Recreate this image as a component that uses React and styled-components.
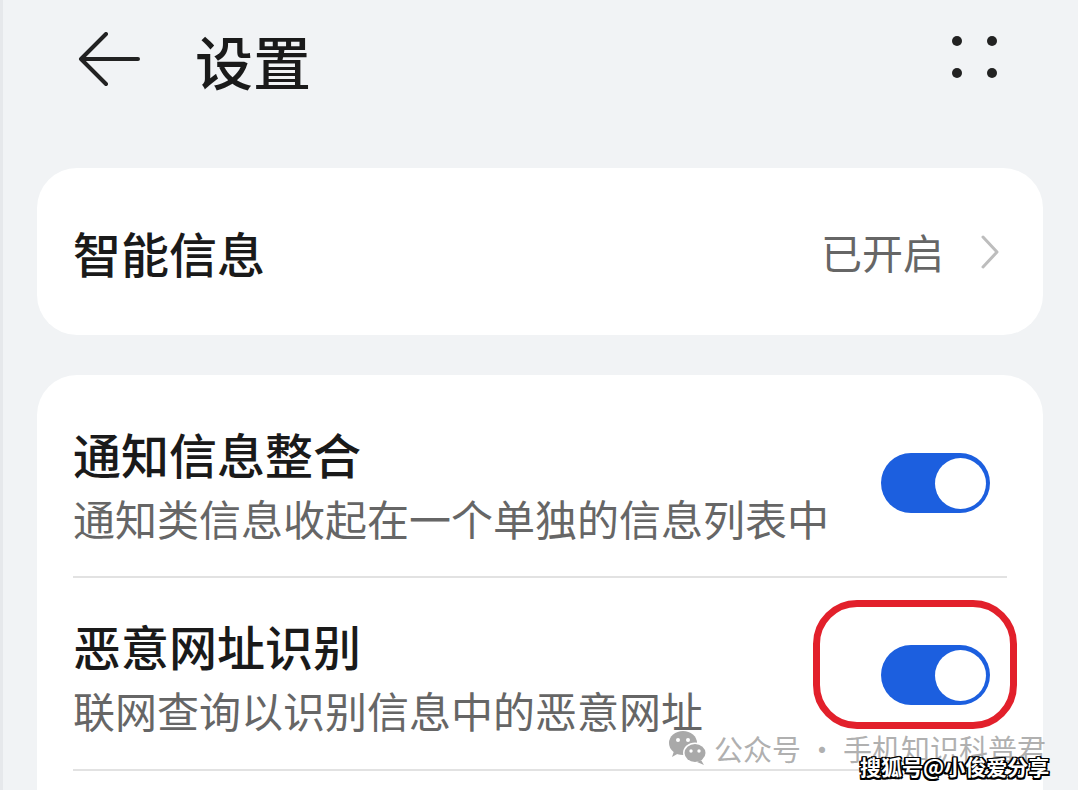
import React from "react";
import styled, { createGlobalStyle } from "styled-components";

const Global = createGlobalStyle`
  html, body { margin: 0; padding: 0; background: #f1f3f5; }
  body { font-family: "Noto Sans CJK SC", "Noto Sans", sans-serif; }
`;

const Page = styled.div`
  position: relative;
  width: 1078px;
  height: 790px;
  overflow: hidden;
  background: #f1f3f5;
  box-sizing: border-box;
  padding: 0 35px 0 37px;
  box-shadow: inset 3px 0 0 #e6e8eb;
`;

const Header = styled.div`
  height: 120px;
  display: flex;
  align-items: center;
  padding: 0 45px 0 41px;
  margin-bottom: 48px;
`;

const BackBtn = styled.div`
  width: 62px;
  height: 56px;
  display: flex;
  align-items: center;
  margin-right: 55px;
`;

const Title = styled.h1`
  margin: 0;
  flex: 1;
  font-size: 58px;
  font-weight: 500;
  color: #1a1a1a;
  line-height: 1;
`;

const Dots = styled.svg`
  margin-top: -6px;
`;

const Card = styled.div`
  background: #fff;
  border-radius: 40px;
  padding: ${(p) => p.$pad || "0 36px"};
  margin-bottom: 40px;
`;

const LinkRow = styled.div`
  height: 167px;
  display: flex;
  align-items: center;
  padding-right: 7px;
`;

const RowTitle = styled.div`
  font-size: 48px;
  font-weight: 500;
  color: #1a1a1a;
  line-height: 60px;
  flex: 1;
`;

const Value = styled.div`
  font-size: 41px;
  color: #666;
  margin-right: 36px;
  line-height: 1;
`;

const SwitchRow = styled.div`
  display: flex;
  align-items: center;
  padding: ${(p) => (p.$first ? "48px 0 27px" : "37px 0 28px")};
  border-bottom: 2px solid #e2e2e2;
`;

const TextCol = styled.div`
  flex: 1;
  display: flex;
  flex-direction: column;
`;

const Sub = styled.div`
  font-size: 42px;
  color: #666;
  line-height: 62px;
  margin-top: 4px;
`;

const ToggleWrap = styled.div`
  position: relative;
  margin-right: 17px;
  margin-top: -6px;
`;

const Track = styled.div`
  width: 109px;
  height: 60px;
  border-radius: 30px;
  background: #1c5fdf;
  display: flex;
  align-items: center;
  justify-content: flex-end;
  padding: 0 4px;
  box-sizing: border-box;
`;

const Thumb = styled.div`
  width: 51px;
  height: 51px;
  border-radius: 50%;
  background: #fff;
`;

const Ring = styled.div`
  position: absolute;
  left: -68px;
  right: -27px;
  top: -45px;
  bottom: -24px;
  border: 7px solid #e2202b;
  border-radius: 44px;
  pointer-events: none;
`;

const Watermark = styled.div`
  position: absolute;
  left: 668px;
  top: 728px;
  display: flex;
  align-items: center;
  gap: 6px;
  white-space: nowrap;
`;

const WmText = styled.span`
  font-size: 29px;
  color: rgba(150, 150, 150, 0.75);
  line-height: 40px;
`;

const Sohu = styled.div`
  position: absolute;
  left: 860px;
  top: 753px;
  font-size: 21px;
  font-weight: 700;
  color: #fff;
  line-height: 26px;
  white-space: nowrap;
  text-shadow: -1.5px -1.5px 0 #000, 1.5px -1.5px 0 #000, -1.5px 1.5px 0 #000,
    1.5px 1.5px 0 #000, 0 1.5px 0 #000, 0 -1.5px 0 #000, 1.5px 0 0 #000,
    -1.5px 0 0 #000;
`;

const Toggle = ({ ring }) => (
  <ToggleWrap>
    <Track>
      <Thumb />
    </Track>
    {ring && <Ring />}
  </ToggleWrap>
);

export default function App() {
  return (
    <>
      <Global />
      <Page>
        <Header>
          <BackBtn>
            <svg width="62" height="56" viewBox="0 0 62 56">
              <path
                d="M60 27H4M28 2L3 27l25 25"
                fill="none"
                stroke="#222"
                strokeWidth="4"
                strokeLinecap="round"
                strokeLinejoin="round"
              />
            </svg>
          </BackBtn>
          <Title>设置</Title>
          <Dots width="46" height="44" viewBox="0 0 46 44">
            <circle cx="5" cy="6" r="5" fill="#222" />
            <circle cx="40" cy="6" r="5" fill="#222" />
            <circle cx="5" cy="38" r="5" fill="#222" />
            <circle cx="40" cy="38" r="5" fill="#222" />
          </Dots>
        </Header>

        <Card>
          <LinkRow>
            <RowTitle>智能信息</RowTitle>
            <Value>已开启</Value>
            <svg width="20" height="34" viewBox="0 0 20 34">
              <path
                d="M3 2l14 15L3 32"
                fill="none"
                stroke="#bdbdbd"
                strokeWidth="3"
                strokeLinecap="round"
                strokeLinejoin="round"
              />
            </svg>
          </LinkRow>
        </Card>

        <Card $pad="0 36px 80px">
          <SwitchRow $first>
            <TextCol>
              <RowTitle>通知信息整合</RowTitle>
              <Sub>通知类信息收起在一个单独的信息列表中</Sub>
            </TextCol>
            <Toggle />
          </SwitchRow>
          <SwitchRow>
            <TextCol>
              <RowTitle>恶意网址识别</RowTitle>
              <Sub>联网查询以识别信息中的恶意网址</Sub>
            </TextCol>
            <Toggle ring />
          </SwitchRow>
        </Card>

        <Watermark>
          <svg width="40" height="36" viewBox="0 0 40 36">
            <ellipse cx="15" cy="13" rx="14" ry="12" fill="#a9a9a9" />
            <path d="M6 21l-2 6 7-4z" fill="#a9a9a9" />
            <circle cx="10" cy="10" r="2" fill="#fff" />
            <circle cx="20" cy="10" r="2" fill="#fff" />
            <ellipse cx="27" cy="23" rx="12" ry="10.5" fill="#fff" />
            <ellipse cx="27" cy="23" rx="10.5" ry="9" fill="#a9a9a9" />
            <path d="M33 30l3 5-7-3z" fill="#a9a9a9" />
            <circle cx="23" cy="21" r="1.7" fill="#fff" />
            <circle cx="31" cy="21" r="1.7" fill="#fff" />
          </svg>
          <WmText>公众号 · 手机知识科普君</WmText>
        </Watermark>
        <Sohu>搜狐号@小俊爱分享</Sohu>
      </Page>
    </>
  );
}
